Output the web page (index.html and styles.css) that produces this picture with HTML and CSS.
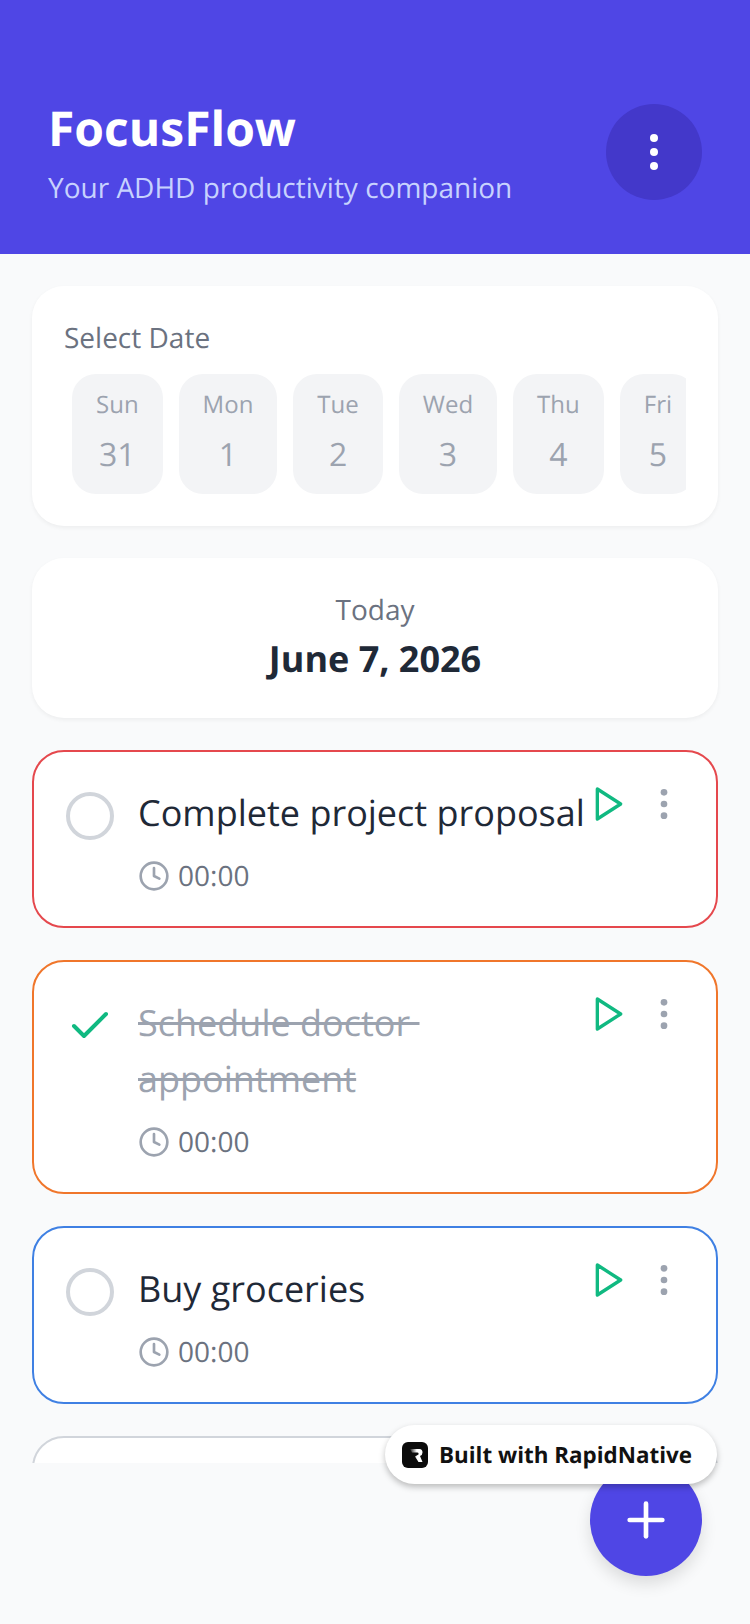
FILE: index.html
```html
<!DOCTYPE html>
<html lang="en">
<head>
    <meta charset="UTF-8">
    <title>FocusFlow</title>
    <link rel="stylesheet" href="styles.css">
</head>
<body>
    <div class="app-container">
        <div class="top-bar">
            <div>
                <h1>FocusFlow</h1>
                <p class="tagline">Your ADHD productivity companion</p>
            </div>
            <button class="menu-btn">
                <svg width="48" height="48" viewBox="0 0 48 48" fill="#fff">
                    <circle cx="24" cy="10" r="4"></circle>
                    <circle cx="24" cy="24" r="4"></circle>
                    <circle cx="24" cy="38" r="4"></circle>
                </svg>
            </button>
        </div>

        <div class="content">
            <div class="card date-card">
                <div class="card-label">Select Date</div>
                <div class="day-strip">
                    <div class="day"><span class="day-name">Sun</span><span class="day-num">31</span></div>
                    <div class="day"><span class="day-name">Mon</span><span class="day-num">1</span></div>
                    <div class="day"><span class="day-name">Tue</span><span class="day-num">2</span></div>
                    <div class="day"><span class="day-name">Wed</span><span class="day-num">3</span></div>
                    <div class="day"><span class="day-name">Thu</span><span class="day-num">4</span></div>
                    <div class="day"><span class="day-name">Fri</span><span class="day-num">5</span></div>
                </div>
            </div>

            <div class="card today-card">
                <div class="card-label">Today</div>
                <div class="today-date">June 7, 2026</div>
            </div>

            <div class="task-list">
                <div class="task task-red">
                    <span class="check-circle"></span>
                    <div class="task-body">
                        <div class="task-title">Complete project proposal</div>
                        <div class="task-time">
                            <svg width="32" height="32" viewBox="0 0 24 24" fill="none" stroke="#9ca3af" stroke-width="2" stroke-linecap="round" stroke-linejoin="round">
                                <circle cx="12" cy="12" r="10"></circle>
                                <polyline points="12 6 12 12 16 14"></polyline>
                            </svg>
                            00:00
                        </div>
                    </div>
                    <div class="task-actions">
                        <svg width="40" height="40" viewBox="0 0 24 24" fill="none" stroke="#10b981" stroke-width="2" stroke-linecap="round" stroke-linejoin="round">
                            <polygon points="5 3 19 12 5 21 5 3"></polygon>
                        </svg>
                        <svg width="40" height="40" viewBox="0 0 24 24" fill="#9ca3af">
                            <circle cx="12" cy="5" r="2"></circle>
                            <circle cx="12" cy="12" r="2"></circle>
                            <circle cx="12" cy="19" r="2"></circle>
                        </svg>
                    </div>
                </div>

                <div class="task task-orange">
                    <svg class="check-mark" width="48" height="48" viewBox="0 0 24 24" fill="none" stroke="#10b981" stroke-width="2" stroke-linecap="round" stroke-linejoin="round">
                        <polyline points="20 6 9 17 4 12"></polyline>
                    </svg>
                    <div class="task-body">
                        <div class="task-title done">Schedule doctor <br>appointment</div>
                        <div class="task-time">
                            <svg width="32" height="32" viewBox="0 0 24 24" fill="none" stroke="#9ca3af" stroke-width="2" stroke-linecap="round" stroke-linejoin="round">
                                <circle cx="12" cy="12" r="10"></circle>
                                <polyline points="12 6 12 12 16 14"></polyline>
                            </svg>
                            00:00
                        </div>
                    </div>
                    <div class="task-actions">
                        <svg width="40" height="40" viewBox="0 0 24 24" fill="none" stroke="#10b981" stroke-width="2" stroke-linecap="round" stroke-linejoin="round">
                            <polygon points="5 3 19 12 5 21 5 3"></polygon>
                        </svg>
                        <svg width="40" height="40" viewBox="0 0 24 24" fill="#9ca3af">
                            <circle cx="12" cy="5" r="2"></circle>
                            <circle cx="12" cy="12" r="2"></circle>
                            <circle cx="12" cy="19" r="2"></circle>
                        </svg>
                    </div>
                </div>

                <div class="task task-blue">
                    <span class="check-circle"></span>
                    <div class="task-body">
                        <div class="task-title">Buy groceries</div>
                        <div class="task-time">
                            <svg width="32" height="32" viewBox="0 0 24 24" fill="none" stroke="#9ca3af" stroke-width="2" stroke-linecap="round" stroke-linejoin="round">
                                <circle cx="12" cy="12" r="10"></circle>
                                <polyline points="12 6 12 12 16 14"></polyline>
                            </svg>
                            00:00
                        </div>
                    </div>
                    <div class="task-actions">
                        <svg width="40" height="40" viewBox="0 0 24 24" fill="none" stroke="#10b981" stroke-width="2" stroke-linecap="round" stroke-linejoin="round">
                            <polygon points="5 3 19 12 5 21 5 3"></polygon>
                        </svg>
                        <svg width="40" height="40" viewBox="0 0 24 24" fill="#9ca3af">
                            <circle cx="12" cy="5" r="2"></circle>
                            <circle cx="12" cy="12" r="2"></circle>
                            <circle cx="12" cy="19" r="2"></circle>
                        </svg>
                    </div>
                </div>

                <div class="task task-gray"></div>
            </div>
        </div>

        <button class="fab">
            <svg width="56" height="56" viewBox="0 0 24 24" fill="none" stroke="#fff" stroke-width="2" stroke-linecap="round">
                <line x1="12" y1="5" x2="12" y2="19"></line>
                <line x1="5" y1="12" x2="19" y2="12"></line>
            </svg>
        </button>

        <div class="built-badge">
            <svg width="26" height="26" viewBox="0 0 26 26">
                <defs>
                    <linearGradient id="logoFade" x1="0" y1="0" x2="1" y2="0">
                        <stop offset="0" stop-color="#1c1c1c"></stop>
                        <stop offset="0.55" stop-color="#fff"></stop>
                    </linearGradient>
                </defs>
                <rect width="26" height="26" rx="6" fill="#0b0b0b"></rect>
                <path d="M8 7H17.5Q20.5 7 20.5 10.5Q20.5 13 18 14L20.5 20H16.5L13 14.5L16.5 12.5Q17 10.5 15.5 10.5H10Z" fill="url(#logoFade)"></path>
            </svg>
            Built with RapidNative
        </div>
    </div>
</body>
</html>
```

FILE: styles.css
```css
* {
    margin: 0;
    padding: 0;
    box-sizing: border-box;
    font-family: "Open Sans", sans-serif;
    text-rendering: geometricPrecision;
}

body {
    background: #f9fafb;
    overflow: hidden;
}

.app-container {
    width: 750px;
    height: 1624px;
    display: flex;
    flex-direction: column;
    position: relative;
    overflow: hidden;
}

.top-bar {
    height: 254px;
    padding: 97px 48px 0;
    background: #4f46e5;
    display: flex;
    justify-content: space-between;
    align-items: flex-start;
    flex-shrink: 0;
}

.top-bar h1 {
    font-size: 48px;
    font-weight: 700;
    line-height: 64px;
    color: #fff;
}

.tagline {
    font-size: 28px;
    line-height: 40px;
    margin-top: 7px;
    color: #c7d2fe;
}

.menu-btn {
    width: 96px;
    height: 96px;
    margin-top: 7px;
    border: none;
    border-radius: 50%;
    background: #4338ca;
    display: flex;
    align-items: center;
    justify-content: center;
}

.content {
    padding: 32px 32px 0;
    display: flex;
    flex-direction: column;
    gap: 32px;
    height: 1209px;
    overflow: hidden;
}

.card {
    background: #fff;
    border-radius: 32px;
    box-shadow: 0 2px 4px rgba(0, 0, 0, 0.05);
    flex-shrink: 0;
}

.card-label {
    font-size: 28px;
    line-height: 40px;
    color: #6b7280;
}

.date-card {
    height: 240px;
    padding: 32px 32px 0;
}

.day-strip {
    display: flex;
    margin-top: 16px;
    overflow: hidden;
}

.day {
    margin: 0 8px;
    padding: 13px 24px 0;
    height: 120px;
    background: #f3f4f6;
    border-radius: 24px;
    display: flex;
    flex-direction: column;
    align-items: center;
    flex-shrink: 0;
}

.day-name {
    font-size: 24px;
    line-height: 36px;
    color: #9ca3af;
}

.day-num {
    font-size: 32px;
    line-height: 44px;
    margin-top: 10px;
    color: #9ca3af;
}

.today-card {
    height: 160px;
    padding-top: 32px;
    text-align: center;
}

.today-date {
    font-size: 36px;
    font-weight: 700;
    line-height: 52px;
    margin-top: 3px;
    color: #1f2937;
}

.task-list {
    display: flex;
    flex-direction: column;
    gap: 32px;
}

.task {
    background: #fff;
    border: 2px solid #e5e7eb;
    border-radius: 32px;
    padding: 32px;
    display: flex;
    flex-shrink: 0;
}

.task-red { border-color: #e5484d; }
.task-orange { border-color: #f0762b; }
.task-blue { border-color: #3f80e3; }
.task-gray { border-color: #d1d5db; height: 178px; }

.check-circle {
    width: 48px;
    height: 48px;
    margin-top: 8px;
    border: 4px solid #d1d5db;
    border-radius: 50%;
    flex-shrink: 0;
}

.check-mark {
    margin-top: 8px;
    flex-shrink: 0;
}

.task-body {
    flex: 1;
    min-width: 0;
    margin-left: 24px;
}

.task-title {
    font-size: 36px;
    line-height: 56px;
    margin-top: 1px;
    white-space: pre-wrap;
    color: #1f2937;
}

.task-title.done {
    color: #9ca3af;
    text-decoration: line-through;
}

.task-time {
    display: flex;
    align-items: center;
    gap: 8px;
    margin-top: 17px;
    font-size: 28px;
    line-height: 36px;
    color: #6b7280;
}

.task-actions {
    display: flex;
    gap: 15px;
    align-self: flex-start;
    flex-shrink: 0;
}

.fab {
    position: absolute;
    right: 48px;
    top: 1464px;
    width: 112px;
    height: 112px;
    border: none;
    border-radius: 50%;
    background: #4f46e5;
    box-shadow: 0 8px 16px rgba(0, 0, 0, 0.12);
    display: flex;
    align-items: center;
    justify-content: center;
}

.built-badge {
    position: absolute;
    top: 1425px;
    left: 385px;
    width: 332px;
    height: 59px;
    padding-left: 17px;
    border-radius: 30px;
    background: #fff;
    box-shadow: 0 3px 6px rgba(0, 0, 0, 0.25);
    display: flex;
    align-items: center;
    gap: 11px;
    font-size: 22.4px;
    font-weight: 700;
    color: #111;
}
```
